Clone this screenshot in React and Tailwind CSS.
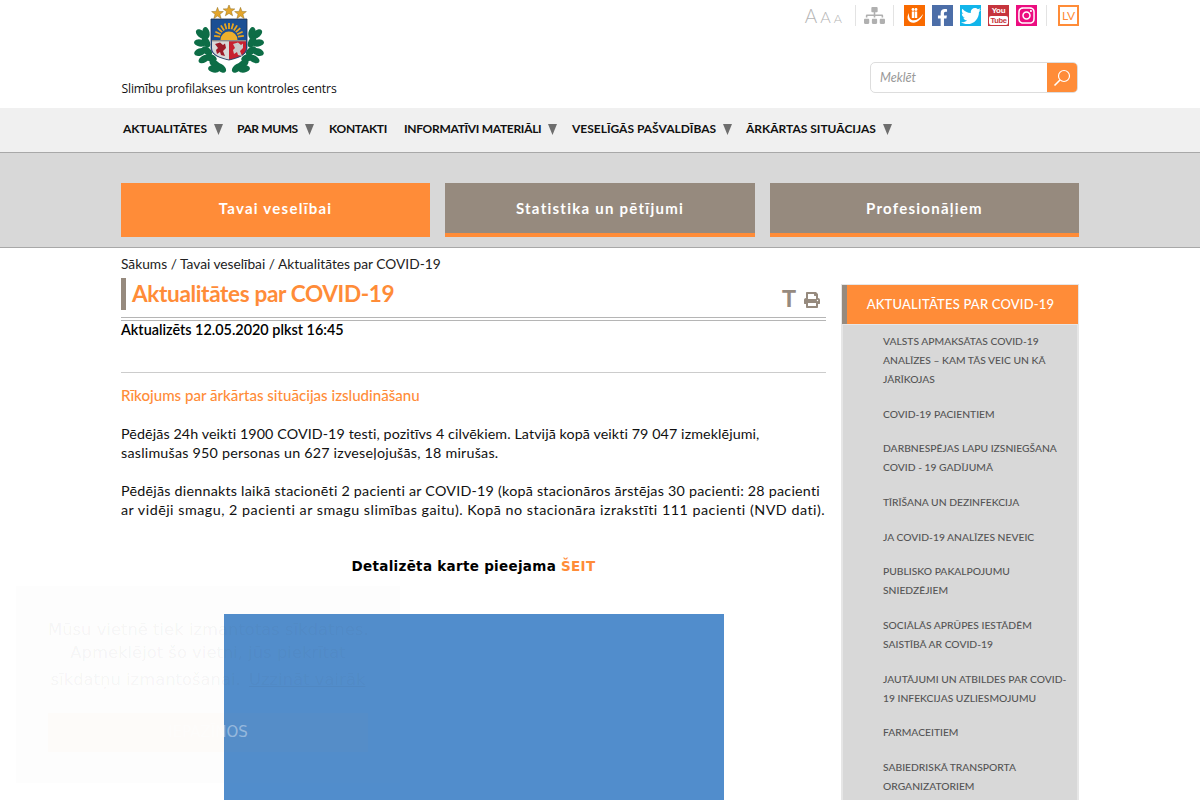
import React from "react";
import { FaSitemap, FaFacebookF, FaTwitter, FaInstagram, FaPrint } from "react-icons/fa";

const F = "font-['Lato','Open_Sans',sans-serif]";

function Leaf({ x, y, r }) {
  return <ellipse cx={x} cy={y} rx="6" ry="3.6" transform={`rotate(${r} ${x} ${y})`} fill="#0d6d46" />;
}

function Crest() {
  const rays = [];
  for (let i = 0; i < 11; i++) {
    const a = (Math.PI * (i + 0.5)) / 11;
    rays.push(<line key={i} x1={35 - 9 * Math.cos(a)} y1={33 - 9 * Math.sin(a)} x2={35 - 15 * Math.cos(a)} y2={33 - 15 * Math.sin(a)} stroke="#e9a520" strokeWidth="1.8" />);
  }
  const star = (cx, cy, s) => {
    const p = [];
    for (let i = 0; i < 10; i++) {
      const r = i % 2 ? s * 0.42 : s;
      const a = -Math.PI / 2 + (i * Math.PI) / 5;
      p.push(`${cx + r * Math.cos(a)},${cy + r * Math.sin(a)}`);
    }
    return <polygon points={p.join(" ")} fill="#e3a52c" stroke="#7a5a10" strokeWidth=".4" />;
  };
  return (
    <svg width="70" height="70" viewBox="0 0 70 70">
      {star(23.5, 8.5, 6.2)}{star(35, 5.8, 6.2)}{star(46.5, 8.5, 6.2)}
      <Leaf x={7} y={29} r={40} /><Leaf x={12} y={28} r={80} /><Leaf x={6} y={38} r={10} /><Leaf x={12} y={37} r={60} />
      <Leaf x={6} y={47} r={-20} /><Leaf x={13} y={46} r={40} /><Leaf x={10} y={54} r={-30} /><Leaf x={17} y={53} r={20} />
      <Leaf x={21} y={59} r={30} /><Leaf x={27} y={63} r={40} /><Leaf x={20} y={64} r={10} />
      <Leaf x={63} y={29} r={-40} /><Leaf x={58} y={28} r={-80} /><Leaf x={64} y={38} r={-10} /><Leaf x={58} y={37} r={-60} />
      <Leaf x={64} y={47} r={20} /><Leaf x={57} y={46} r={-40} /><Leaf x={60} y={54} r={30} /><Leaf x={53} y={53} r={-20} />
      <Leaf x={49} y={59} r={-30} /><Leaf x={43} y={63} r={-40} /><Leaf x={50} y={64} r={-10} />
      <path d="M17 14H53V43C53 50 44 53 35 55C26 53 17 50 17 43Z" fill="#1c4f94" stroke="#20304f" strokeWidth=".8" />
      <path d="M18 36H35V54.4C26 52.6 18 49.6 18 43Z" fill="#d9d9d9" />
      <path d="M35 36H52V43C52 49.6 44 52.6 35 54.4Z" fill="#c8202f" />
      {rays}
      <path d="M26.5 35A8.5 8.5 0 0 1 43.5 35Z" fill="#eeb02c" />
      <rect x="18" y="35" width="34" height="1.4" fill="#8c8c8c" />
      <path d="M21 39L26 37.5L29 40L31 38.5L32 43L29 46L31 51L27 50L26 47L23 49L22 45L24 43Z" fill="#9d1c2a" />
      <path d="M39 39L44 37.5L47 40L49 38.5L49 43L46 46L48 51L44 50L43 47L40 49L39 45L41 43Z" fill="#c9c9c9" />
    </svg>
  );
}

function Arrow() {
  return (
    <svg width="9" height="11" viewBox="0 0 9 11" className="ml-[7px] mt-[1px]">
      <polygon points="0,0 9,0 4.5,11" fill="#6e6e6e" />
    </svg>
  );
}

function NavItem({ label, arrow, gap, w, track }) {
  return (
    <div className={`flex items-center ${gap}`}>
      <span className={`text-[12px] font-bold text-[#111] uppercase whitespace-nowrap ${w} ${track}`}>{label}</span>
      {arrow && <Arrow />}
    </div>
  );
}

function Tab({ label, active }) {
  return (
    <div className={`h-[54px] border-b-4 border-[#ff8c38] flex items-center justify-center text-white font-bold text-[15px] tracking-[1.25px] ${active ? "bg-[#ff8c38]" : "bg-[#968a7e]"}`}>
      {label}
    </div>
  );
}

const side = [
  "VALSTS APMAKSĀTAS COVID-19 ANALĪZES – KAM TĀS VEIC UN KĀ JĀRĪKOJAS",
  "COVID-19 PACIENTIEM",
  "DARBNESPĒJAS LAPU IZSNIEGŠANA COVID - 19 GADĪJUMĀ",
  "TĪRĪŠANA UN DEZINFEKCIJA",
  "JA COVID-19 ANALĪZES NEVEIC",
  "PUBLISKO PAKALPOJUMU SNIEDZĒJIEM",
  "SOCIĀLĀS APRŪPES IESTĀDĒM SAISTĪBĀ AR COVID-19",
  "JAUTĀJUMI UN ATBILDES PAR COVID-19 INFEKCIJAS UZLIESMOJUMU",
  "FARMACEITIEM",
  "SABIEDRISKĀ TRANSPORTA ORGANIZATORIEM",
];

function Social({ bg, children }) {
  return <div className={`w-[21px] h-[21px] flex items-center justify-center text-white ${bg}`}>{children}</div>;
}

function Sep({ cls }) {
  return <div className={`w-px h-[21px] bg-[#e3e3e3] ${cls || ""}`} />;
}

export default function App() {
  return (
    <div className={`${F} relative h-[800px] overflow-hidden bg-white text-black`}>
      {/* header */}
      <div className="w-[958px] ml-[121px] h-[108px] flex justify-between">
        <div className="w-[216px] flex flex-col items-center pt-[5px]">
          <Crest />
          <div className="text-[12.2px] leading-[16px] mt-[6px] whitespace-nowrap text-[#111] font-['Open_Sans',sans-serif] tracking-[-0.13px]">Slimību profilakses un kontroles centrs</div>
        </div>
        <div className="flex flex-col items-end">
          <div className="flex items-center h-[21px] mt-[5px]">
            <div className="flex items-baseline text-[#b5b5b5] gap-[3px] leading-none mr-[13px] font-light">
              <span className="text-[19px]">A</span><span className="text-[16px]">A</span><span className="text-[12.5px]">A</span>
            </div>
            <Sep />
            <FaSitemap className="mx-[8px] text-[#b0b0b0]" size={21} />
            <Sep cls="mr-[10px]" />
            <div className="flex gap-[7px]">
              <Social bg="bg-[#f96a00]">
                <svg width="19" height="19" viewBox="0 0 19 19">
                  <circle cx="8" cy="3.5" r="1.4" fill="#fff" /><circle cx="11" cy="3.5" r="1.4" fill="#fff" />
                  <path d="M6.8 5.5H9.2V12H6.8ZM9.8 5.5H12.2V12H9.8Z" fill="#fff" />
                  <path d="M4 7C0 13 5 18 10 16.5C14 15.3 17 12 18 8C15 12 12 14.3 8.5 14.3C5 14.3 3.5 11 4 7Z" fill="#fff" />
                </svg>
              </Social>
              <Social bg="bg-[#4c6ea8]"><FaFacebookF size={17} className="mt-[4px]" /></Social>
              <Social bg="bg-[#12b5ea]"><FaTwitter size={20} /></Social>
              <Social bg="bg-[#c6343c]">
                <div className="flex flex-col items-center font-['Liberation_Sans',sans-serif] font-bold leading-none">
                  <span className="text-[8px] leading-[8px] tracking-[-0.3px]">You</span>
                  <span className="text-[7.5px] leading-[9px] mt-px px-px tracking-[-0.3px] rounded-[2px] bg-white text-[#c6343c]">Tube</span>
                </div>
              </Social>
              <Social bg="bg-[#ec0d80]"><FaInstagram size={19} /></Social>
            </div>
            <Sep cls="ml-[9px] mr-[11px]" />
            <div className="w-[21px] h-[21px] border-2 border-[#ff8c38] text-[#ff8c38] text-[12px] leading-[17px] text-center">LV</div>
          </div>
          <div className="mt-[36px] w-[208px] h-[31px] border border-[#ddd] rounded-[5px] flex overflow-hidden mr-px">
            <div className="flex-1 pl-[9px] text-[12.6px] italic text-[#999] leading-[29px]">Meklēt</div>
            <div className="w-[30px] bg-[#ff8c38] flex items-center justify-center">
              <svg width="18" height="18" viewBox="0 0 18 18" fill="none" stroke="#fff" strokeWidth="1.2">
                <circle cx="11" cy="7" r="5.5" /><path d="M7 11L1.5 16.5" strokeWidth="1.6" />
              </svg>
            </div>
          </div>
        </div>
      </div>

      {/* nav */}
      <div className="h-[45px] bg-[#f0f0f0] border-b border-[#a8a8a8]">
        <div className="ml-[123px] h-[41px] flex items-center">
          <NavItem label="Aktualitātes" arrow gap="mr-[14px]" w="w-[84px]" track="tracking-[-0.1px]" />
          <NavItem label="Par mums" arrow gap="mr-[15px]" w="w-[61px]" track="tracking-[-0.4px]" />
          <NavItem label="Kontakti" gap="mr-[17px]" w="w-[58px]" track="tracking-[-0.3px]" />
          <NavItem label="Informatīvi materiāli" arrow gap="mr-[15px]" w="w-[137px]" track="tracking-[-0.3px]" />
          <NavItem label="Veselīgās pašvaldības" arrow gap="mr-[14px]" w="w-[144px]" track="tracking-[0px]" />
          <NavItem label="Ārkārtas situācijas" arrow gap="" w="w-[130px]" track="tracking-[0px]" />
        </div>
      </div>

      {/* tabs */}
      <div className="h-[95px] bg-[#d8d8d8] border-b border-[#a8a8a8] pt-[30px]">
        <div className="w-[958px] ml-[121px] grid grid-cols-3 gap-x-[15.4px]">
          <Tab label="Tavai veselībai" active />
          <Tab label="Statistika un pētījumi" />
          <Tab label="Profesionāļiem" />
        </div>
      </div>

      {/* body */}
      <div className="w-[958px] ml-[121px] flex justify-between">
        <div className="w-[705px]">
          <div className="text-[13.75px] leading-[18px] mt-[7px] text-[#222]">Sākums / Tavai veselībai / Aktualitātes par COVID-19</div>
          <div className="mt-[5px] h-[32px] border-l-[5px] border-[#968a7e] pl-[6px] flex justify-between items-center">
            <div className="text-[#ff8c38] text-[22.6px] font-bold tracking-[-0.37px]">Aktualitātes par COVID-19</div>
            <div className="flex items-center gap-[8px] mr-[6px] mt-[11px] text-[#968a7e]">
              <span className="text-[23px] leading-none font-bold font-['Liberation_Sans',sans-serif]">T</span>
              <FaPrint size={16} />
            </div>
          </div>
          <div className="mt-[7px] border-t border-b border-[#b5b5b5] h-[4px]" />
          <div className="text-[14.4px] font-semibold leading-[18px] text-black">Aktualizēts 12.05.2020 plkst 16:45</div>
          <div className="mt-[33px] border-t border-[#ccc]" />
          <div className="mt-[13px] text-[15.1px] leading-[19px] text-[#ff8c38] font-medium">Rīkojums par ārkārtas situācijas izsludināšanu</div>
          <p className="mt-[19px] text-[14.3px] leading-[19px] text-[#111] whitespace-nowrap">
            <span className="block tracking-[0.09px]">Pēdējās 24h veikti 1900 COVID-19 testi, pozitīvs 4 cilvēkiem. Latvijā kopā veikti 79 047 izmeklējumi,</span>
            <span className="block tracking-[0.22px]">saslimušas 950 personas un 627 izveseļojušās, 18 mirušas.</span>
          </p>
          <p className="mt-[19px] text-[14.3px] leading-[19px] text-[#111] whitespace-nowrap">
            <span className="block tracking-[0.23px]">Pēdējās diennakts laikā stacionēti 2 pacienti ar COVID-19 (kopā stacionāros ārstējas 30 pacienti: 28 pacienti</span>
            <span className="block tracking-[0.5px]">ar vidēji smagu, 2 pacienti ar smagu slimības gaitu). Kopā no stacionāra izrakstīti 111 pacienti (NVD dati).</span>
          </p>
          <div className="mt-[38px] text-center text-[13.5px] font-bold tracking-[0.3px] leading-[19px] font-['DejaVu_Sans',sans-serif]">Detalizēta karte pieejama <span className="text-[#ff8c38]">ŠEIT</span></div>
          <div className="mt-[38px] mx-auto w-[500px] h-[300px] bg-[#518dcc]" />
        </div>

        <div className="w-[238px] mt-[36px] border border-[#e6e6e6] bg-[#e6e6e6] self-start">
          <div className="h-[39px] bg-[#ff8c38] border-l-[5px] border-[#968a7e] pr-[4px] flex items-center justify-center text-white text-[13px] font-medium tracking-[0.2px]">AKTUALITĀTES PAR COVID-19</div>
          <div className="mt-px mx-px bg-[#d8d8d8] pl-[40px] pr-[8px] pt-[7px] pb-[40px] flex flex-col gap-[15.67px]">
            {side.map((s) => (
              <div key={s} className="text-[10.3px] leading-[19px] text-[#555] font-medium">{s}</div>
            ))}
          </div>
        </div>
      </div>

      {/* cookie notice, almost faded out */}
      <div className="absolute left-[16px] top-[586px] w-[384px] h-[197px] bg-[#999]/[0.02] pt-[32px] px-[32px] text-center font-['DejaVu_Sans',sans-serif] text-[16.4px] text-[#333]/[0.05] whitespace-nowrap">
        <div className="leading-[23px]">Mūsu vietnē tiek izmantotas sīkdatnes.</div>
        <div className="leading-[23px]">Apmeklējot šo vietni, jūs piekrītat</div>
        <div className="leading-[23px] mt-[4px]">sīkdatņu izmantošanai. <span className="underline ml-[3px]">Uzzināt vairāk</span></div>
        <div className="mt-[22px] h-[39px] bg-[#ff8c38]/[0.02] text-white/40 text-[15px] leading-[39px]">IEPAZĪNOS</div>
      </div>
    </div>
  );
}
